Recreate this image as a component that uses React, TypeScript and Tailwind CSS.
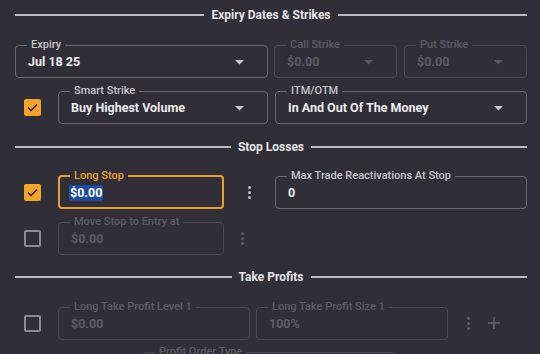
import React from "react";

const font = { fontFamily: "Roboto, 'Liberation Sans', sans-serif" };

function SectionTitle({ title }: { title: string }) {
  return (
    <div className="flex items-center gap-[7px] h-[14px]">
      <div className="flex-1 h-[2px] bg-[#bcbbc1]" />
      <span className="text-[12px] leading-[14px] font-bold text-[#e4e4e7]">{title}</span>
      <div className="flex-1 h-[2px] bg-[#bcbbc1]" />
    </div>
  );
}

function Caret({ disabled }: { disabled?: boolean }) {
  return (
    <svg width="9" height="5" viewBox="0 0 9 5" className="shrink-0 mr-[1px]">
      <path d="M0 0h9L4.5 4.5z" fill={disabled ? "#5b5a63" : "#c9c8cd"} />
    </svg>
  );
}

function Field({
  label,
  value,
  width,
  select,
  disabled,
  focused,
}: {
  label: string;
  value: string;
  width: string;
  select?: boolean;
  disabled?: boolean;
  focused?: boolean;
}) {
  const border = focused
    ? "border-2 border-[#e8a033] pl-[11px] pr-[21px]"
    : disabled
    ? "border border-[#4b4a53] pl-[12px] pr-[22px]"
    : "border border-[#6b6a73] pl-[12px] pr-[22px]";
  const labelColor = focused ? "text-[#e8a033]" : disabled ? "text-[#5d5c65]" : "text-[#c6c5cb]";
  const valueColor = disabled ? "text-[#5d5c65]" : "text-[#ececef]";
  return (
    <fieldset className={`${width} ${border} rounded-[4px] shrink-0 ${focused ? "pb-[6px]" : "pb-[7px]"}`}>
      <legend className={`px-[4px] -ml-[1px] text-[11px] leading-[12px] font-medium ${labelColor}`}>{label}</legend>
      <div className="mt-[3px] h-[16px] flex items-center justify-between">
        {focused ? (
          <span className="text-[12.5px] leading-[16px] font-bold text-white bg-[#1d4ba3] px-[1px] -ml-[2px]">{value}</span>
        ) : (
          <span className={`text-[12.5px] leading-[16px] font-bold ${valueColor}`}>{value}</span>
        )}
        {select && <Caret disabled={disabled} />}
      </div>
    </fieldset>
  );
}

function Check({ checked }: { checked?: boolean }) {
  return (
    <div className="w-[43px] shrink-0 flex mt-[5px]">
      {checked ? (
        <div className="ml-[9px] w-[17px] h-[17px] rounded-[2px] bg-[#f3a42a] flex items-center justify-center">
          <svg width="11" height="9" viewBox="0 0 11 9">
            <path d="M1 4.5l3 3L10 1.5" stroke="#3a2a14" strokeWidth="1.6" fill="none" />
          </svg>
        </div>
      ) : (
        <div className="ml-[9px] w-[17px] h-[17px] rounded-[2px] border-2 border-[#8c8b93]" />
      )}
    </div>
  );
}

function Kebab({ disabled }: { disabled?: boolean }) {
  const c = disabled ? "bg-[#5f5e66]" : "bg-[#c3c2c7]";
  return (
    <div className="flex flex-col gap-[2px] items-center mt-[5px]">
      <div className={`w-[3px] h-[3px] rounded-full ${c}`} />
      <div className={`w-[3px] h-[3px] rounded-full ${c}`} />
      <div className={`w-[3px] h-[3px] rounded-full ${c}`} />
    </div>
  );
}

export default function App() {
  return (
    <div className="w-[540px] h-[354px] overflow-hidden bg-[#302f38]" style={font}>
      <div className="pl-[15px] pr-[13px] flex flex-col">
        <div className="mt-[8px]">
          <SectionTitle title="Expiry Dates & Strikes" />
        </div>

        <div className="mt-[17px] flex items-center">
          <Field label="Expiry" value="Jul 18 25" width="w-[253px]" select />
          <div className="ml-[6px]">
            <Field label="Call Strike" value="$0.00" width="w-[123px]" select disabled />
          </div>
          <div className="ml-[7px]">
            <Field label="Put Strike" value="$0.00" width="w-[123px]" select disabled />
          </div>
        </div>

        <div className="mt-[7px] flex items-center">
          <Check checked />
          <Field label="Smart Strike" value="Buy Highest Volume" width="w-[210px]" select />
          <div className="ml-[7px]">
            <Field label="ITM/OTM" value="In And Out Of The Money" width="w-[252px]" select />
          </div>
        </div>

        <div className="mt-[16px]">
          <SectionTitle title="Stop Losses" />
        </div>

        <div className="mt-[16px] flex items-center">
          <Check checked />
          <Field label="Long Stop" value="$0.00" width="w-[166px]" focused />
          <div className="w-[52px] flex justify-center">
            <Kebab />
          </div>
          <Field label="Max Trade Reactivations At Stop" value="0" width="w-[252px]" />
        </div>

        <div className="mt-[7px] flex items-center">
          <Check />
          <Field label="Move Stop to Entry at" value="$0.00" width="w-[166px]" disabled />
          <div className="w-[37px] flex justify-center">
            <Kebab disabled />
          </div>
        </div>

        <div className="mt-[15px]">
          <SectionTitle title="Take Profits" />
        </div>

        <div className="mt-[17px] flex items-center">
          <Check />
          <Field label="Long Take Profit Level 1" value="$0.00" width="w-[192px]" disabled />
          <div className="ml-[6px]">
            <Field label="Long Take Profit Size 1" value="100%" width="w-[192px]" disabled />
          </div>
          <div className="w-[40px] flex justify-center">
            <Kebab disabled />
          </div>
          <svg width="12" height="12" viewBox="0 0 12 12" className="mt-[5px]">
            <path d="M6 0v12M0 6h12" stroke="#66656d" strokeWidth="1.6" />
          </svg>
        </div>

        <div className="mt-[6px] flex">
          <div className="ml-[128px]">
            <Field label="Profit Order Type" value="" width="w-[254px]" select disabled />
          </div>
        </div>
      </div>
    </div>
  );
}
